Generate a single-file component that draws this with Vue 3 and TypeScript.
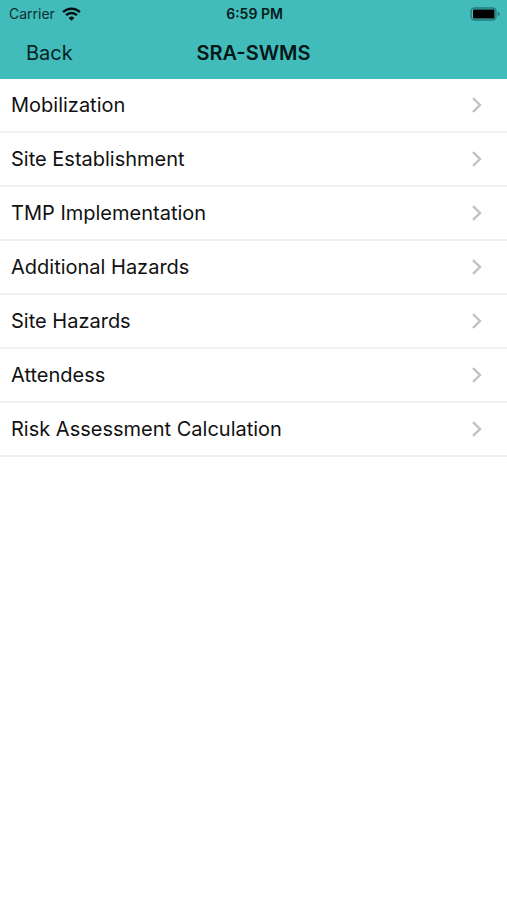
<script setup lang="ts">
interface Section {
  id: string
  title: string
}

const sections: Section[] = [
  { id: 'mobilization', title: 'Mobilization' },
  { id: 'site-establishment', title: 'Site Establishment' },
  { id: 'tmp-implementation', title: 'TMP Implementation' },
  { id: 'additional-hazards', title: 'Additional Hazards' },
  { id: 'site-hazards', title: 'Site Hazards' },
  { id: 'attendess', title: 'Attendess' },
  { id: 'risk-assessment', title: 'Risk Assessment Calculation' },
]
</script>

<template>
  <div class="screen">
    <header class="top">
      <div class="status">
        <div class="carrier">
          <span>Carrier</span>
          <svg class="wifi" viewBox="0 0 19 14" aria-hidden="true">
            <path d="M1.1 5.2a11.9 11.9 0 0 1 16.8 0" />
            <path d="M4.1 8.2a7.6 7.6 0 0 1 10.8 0" />
            <path class="dot" d="M9.5 13.8 6.6 10.9a4.1 4.1 0 0 1 5.8 0z" />
          </svg>
        </div>
        <time class="clock">6:59 PM</time>
        <svg class="battery" viewBox="0 0 30 14" aria-hidden="true">
          <rect class="shell" x="1" y="1" width="25" height="12" rx="3.5" />
          <rect x="3" y="2.6" width="21.5" height="8.8" rx="1.2" />
          <path class="cap" d="M27.8 4.8q2 .6 2 2.2t-2 2.2z" />
        </svg>
      </div>
      <nav class="bar">
        <button class="back" type="button">Back</button>
        <h1 class="title">SRA-SWMS</h1>
      </nav>
    </header>
    <main>
      <ul class="list">
        <li v-for="section in sections" :key="section.id">
          <a class="row" :href="`#${section.id}`">
            <span>{{ section.title }}</span>
            <svg class="chevron" viewBox="0 0 10 16" aria-hidden="true">
              <path d="M1 1.2 8 8l-7 6.8" />
            </svg>
          </a>
        </li>
      </ul>
    </main>
  </div>
</template>

<style>
body {
  background: #fff;
}
</style>

<style scoped>
.screen {
  min-height: 100vh;
  background: #fff;
  color: #111;
  font-family: Inter, "Liberation Sans", sans-serif;
  font-size: 20px;
}

.top {
  background: #42bcbb;
}

.status,
.bar {
  display: grid;
  grid-template-columns: 1fr auto 1fr;
  align-items: center;
}

.status {
  height: 27px;
  padding: 0 7px 0 9px;
  font-size: 14px;
}

.carrier {
  display: flex;
  align-items: center;
  gap: 7px;
  color: #0d2f2f;
}

.wifi {
  width: 19px;
  height: 14px;
  fill: none;
  stroke: #06100f;
  stroke-width: 2.5;
}

.wifi .dot {
  fill: #06100f;
  stroke: none;
}

.clock {
  color: #061a1a;
  font-weight: 600;
}

.battery {
  justify-self: end;
  width: 30px;
  height: 14px;
  fill: #000;
}

.battery .shell {
  fill: none;
  stroke: #24797a;
  stroke-width: 1.4;
}

.battery .cap {
  fill: #24797a;
}

.bar {
  height: 52px;
  padding: 0 26px;
}

.back {
  justify-self: start;
  padding: 0;
  border: 0;
  background: none;
  color: #062323;
  font: inherit;
}

.title {
  margin: 0;
  color: #041717;
  font-size: 20px;
  font-weight: 600;
}

.list {
  margin: 0;
  padding: 0;
  list-style: none;
}

.row {
  display: flex;
  align-items: center;
  justify-content: space-between;
  box-sizing: border-box;
  height: 54px;
  padding: 0 25px 0 11px;
  border-bottom: 2px solid #f1f1f1;
  color: inherit;
  text-decoration: none;
}

.chevron {
  width: 10px;
  height: 16px;
  fill: none;
  stroke: #c2c2c4;
  stroke-width: 2.4;
}
</style>
